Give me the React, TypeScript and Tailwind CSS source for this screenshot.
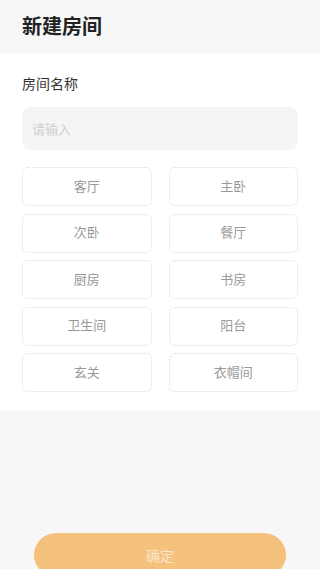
import { useState } from 'react';

const ROOMS = ['客厅', '主卧', '次卧', '餐厅', '厨房', '书房', '卫生间', '阳台', '玄关', '衣帽间'];

export default function App() {
  const [name, setName] = useState('');

  return (
    <div
      className="min-h-screen bg-[#f7f7f7]"
      style={{ fontFamily: '"Noto Sans", "Noto Sans CJK SC", sans-serif' }}
    >
      {/* 标题 */}
      <div className="h-[53px] flex items-center px-[22px]">
        <h1 className="text-[20px] leading-none font-bold text-[#222]">新建房间</h1>
      </div>

      {/* 表单 */}
      <div className="bg-white px-[22px] pt-[21px] pb-[19px]">
        <div className="text-[14px] leading-[20px] text-[#333]">房间名称</div>
        <input
          className="mt-[13px] w-full h-[43px] rounded-[8px] bg-[#f5f5f5] px-[10px] text-[13px] text-[#333] placeholder:text-[#cfcfcf] outline-none"
          placeholder="请输入"
          value={name}
          onChange={e => setName(e.target.value)}
        />
        <div className="mt-[17px] grid grid-cols-2 gap-x-[17px] gap-y-[7.5px]">
          {ROOMS.map(r => (
            <button
              key={r}
              onClick={() => setName(r)}
              className="h-[39px] rounded-[6px] border border-dotted border-[#dcdcdc] text-[13px] text-[#999] flex items-center justify-center"
            >
              {r}
            </button>
          ))}
        </div>
      </div>

      {/* 确定按钮 */}
      <div className="px-[34px] pt-[122px] pb-[20px]">
        <button className="w-full h-[44px] rounded-full bg-[#f5c27d] text-[14px] text-white/60">
          确定
        </button>
      </div>
    </div>
  );
}
